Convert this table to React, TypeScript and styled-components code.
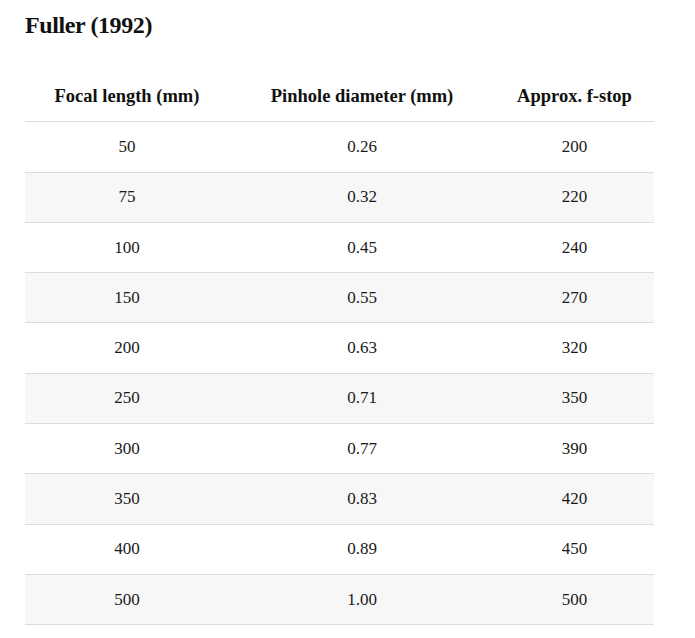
import React from "react";
import styled, { createGlobalStyle } from "styled-components";

const Global = createGlobalStyle`
  body {
    margin: 0;
    background: #ffffff;
    font-family: "Liberation Serif", Georgia, serif;
    color: #1a1a1a;
  }
`;

const Page = styled.div`
  padding: 10px 41px 0 25px;
`;

const Title = styled.h2`
  margin: 0 0 32px 0;
  font-size: 24px;
  line-height: 30px;
  font-weight: 700;
  letter-spacing: -0.4px;
  color: #111;
`;

const Table = styled.table`
  width: 629px;
  border-collapse: collapse;
  font-variant-numeric: oldstyle-nums;
`;

const Col = styled.col<{ $w: number }>`
  width: ${(p) => p.$w}px;
`;

const HeadCell = styled.th`
  height: 49.3px;
  padding: 0 6px;
  font-size: 18.5px;
  font-weight: 700;
  text-align: center;
  color: #111;
  border-bottom: 1px solid #dcdcdc;
`;

const Row = styled.tr<{ $striped: boolean }>`
  background: ${(p) => (p.$striped ? "#f7f7f7" : "#ffffff")};
`;

const Cell = styled.td`
  height: 49.3px;
  padding: 0 6px;
  font-size: 17px;
  text-align: center;
  color: #1a1a1a;
  border-bottom: 1px solid #dcdcdc;
`;

const rows: [string, string, string][] = [
  ["50", "0.26", "200"],
  ["75", "0.32", "220"],
  ["100", "0.45", "240"],
  ["150", "0.55", "270"],
  ["200", "0.63", "320"],
  ["250", "0.71", "350"],
  ["300", "0.77", "390"],
  ["350", "0.83", "420"],
  ["400", "0.89", "450"],
  ["500", "1.00", "500"],
];

export default function App() {
  return (
    <Page>
      <Global />
      <Title>Fuller (1992)</Title>
      <Table>
        <colgroup>
          <Col $w={204} />
          <Col $w={266} />
          <Col $w={159} />
        </colgroup>
        <thead>
          <tr>
            <HeadCell>Focal length (mm)</HeadCell>
            <HeadCell>Pinhole diameter (mm)</HeadCell>
            <HeadCell>Approx. f-stop</HeadCell>
          </tr>
        </thead>
        <tbody>
          {rows.map((r, i) => (
            <Row key={r[0]} $striped={i % 2 === 1}>
              <Cell>{r[0]}</Cell>
              <Cell>{r[1]}</Cell>
              <Cell>{r[2]}</Cell>
            </Row>
          ))}
        </tbody>
      </Table>
    </Page>
  );
}
